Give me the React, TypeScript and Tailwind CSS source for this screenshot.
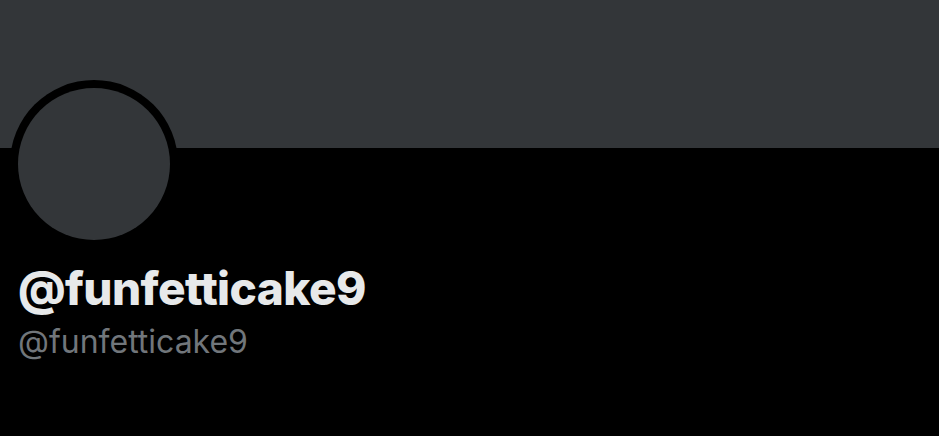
export default function App() {
  return (
    <div className="w-[939px] h-[436px] bg-black overflow-hidden" style={{ fontFamily: "Inter, 'Liberation Sans', sans-serif" }}>
      {/* banner */}
      <div className="h-[148px] bg-[#333639]" />
      <div className="px-[10px]">
        <div className="-mt-[68px] w-[168px] h-[168px] rounded-full bg-black p-[8px]">
          <div className="w-full h-full rounded-full bg-[#333639]" />
        </div>
        <div className="pl-[8px] mt-[17px]">
          <div className="text-[46px] leading-[46px] font-extrabold text-[#e7e9ea] tracking-[-0.6px]">@funfetticake9</div>
          <div className="text-[32px] leading-[36px] text-[#71767b] mt-[13px]">@funfetticake9</div>
        </div>
      </div>
    </div>
  );
}
